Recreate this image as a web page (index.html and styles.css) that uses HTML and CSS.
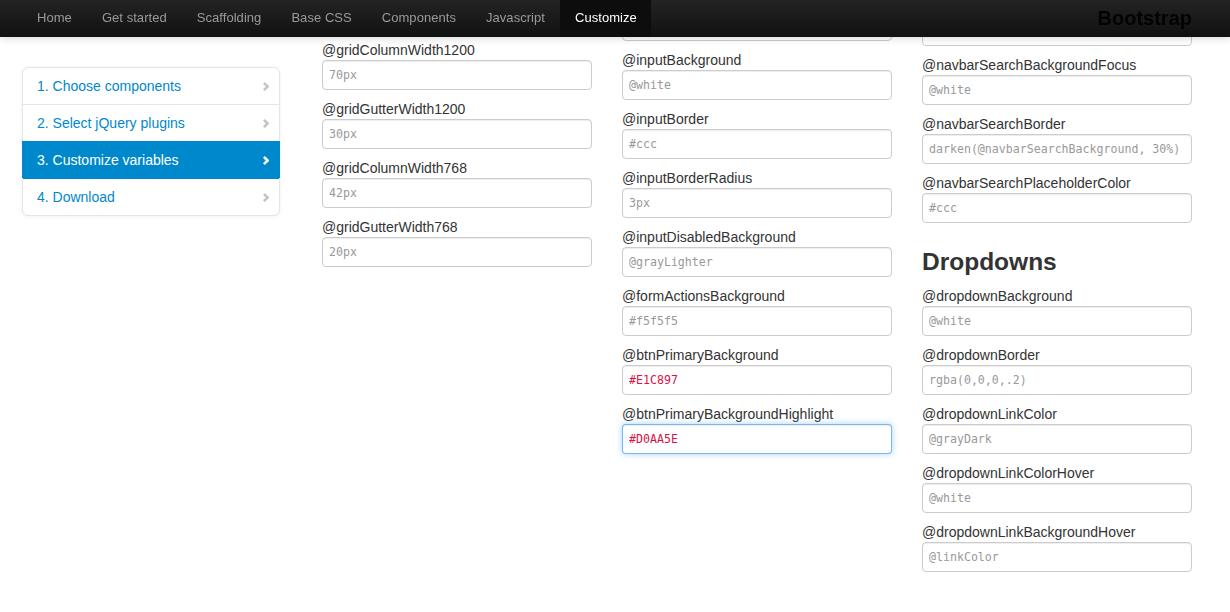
FILE: index.html
```html
<!DOCTYPE html>
<html>
<head>
<meta charset="utf-8">
<title>Customize · Bootstrap</title>
<link rel="stylesheet" href="styles.css">
</head>
<body>
<div class="navbar">
  <ul class="nav">
    <li><a href="#">Home</a></li>
    <li><a href="#">Get started</a></li>
    <li><a href="#">Scaffolding</a></li>
    <li><a href="#">Base CSS</a></li>
    <li><a href="#">Components</a></li>
    <li><a href="#">Javascript</a></li>
    <li class="active"><a href="#">Customize</a></li>
  </ul>
  <a class="brand" href="#">Bootstrap</a>
</div>

<div class="page">
  <ul class="sidenav">
    <li><a href="#">1. Choose components<svg class="chev" viewBox="0 0 6 9"><path d="M0.9 0.9 L4.6 4.5 L0.9 8.1" /></svg></a></li>
    <li><a href="#">2. Select jQuery plugins<svg class="chev" viewBox="0 0 6 9"><path d="M0.9 0.9 L4.6 4.5 L0.9 8.1" /></svg></a></li>
    <li class="active"><a href="#">3. Customize variables<svg class="chev" viewBox="0 0 6 9"><path d="M0.9 0.9 L4.6 4.5 L0.9 8.1" /></svg></a></li>
    <li><a href="#">4. Download<svg class="chev" viewBox="0 0 6 9"><path d="M0.9 0.9 L4.6 4.5 L0.9 8.1" /></svg></a></li>
  </ul>

  <div class="col col-a">
    <div class="group"><label>@gridColumnWidth1200</label><input type="text" placeholder="70px"></div>
    <div class="group"><label>@gridGutterWidth1200</label><input type="text" placeholder="30px"></div>
    <div class="group"><label>@gridColumnWidth768</label><input type="text" placeholder="42px"></div>
    <div class="group"><label>@gridGutterWidth768</label><input type="text" placeholder="20px"></div>
  </div>

  <div class="col col-b">
    <div class="group"><input type="text"></div>
    <div class="group"><label>@inputBackground</label><input type="text" placeholder="@white"></div>
    <div class="group"><label>@inputBorder</label><input type="text" placeholder="#ccc"></div>
    <div class="group"><label>@inputBorderRadius</label><input type="text" placeholder="3px"></div>
    <div class="group"><label>@inputDisabledBackground</label><input type="text" placeholder="@grayLighter"></div>
    <div class="group"><label>@formActionsBackground</label><input type="text" placeholder="#f5f5f5"></div>
    <div class="group"><label>@btnPrimaryBackground</label><input type="text" value="#E1C897"></div>
    <div class="group"><label>@btnPrimaryBackgroundHighlight</label><input class="focus" type="text" value="#D0AA5E"></div>
  </div>

  <div class="col col-c">
    <div class="group"><input type="text"></div>
    <div class="group"><label>@navbarSearchBackgroundFocus</label><input type="text" placeholder="@white"></div>
    <div class="group"><label>@navbarSearchBorder</label><input type="text" placeholder="darken(@navbarSearchBackground, 30%)"></div>
    <div class="group"><label>@navbarSearchPlaceholderColor</label><input type="text" placeholder="#ccc"></div>
    <h3>Dropdowns</h3>
    <div class="group"><label>@dropdownBackground</label><input type="text" placeholder="@white"></div>
    <div class="group"><label>@dropdownBorder</label><input type="text" placeholder="rgba(0,0,0,.2)"></div>
    <div class="group"><label>@dropdownLinkColor</label><input type="text" placeholder="@grayDark"></div>
    <div class="group"><label>@dropdownLinkColorHover</label><input type="text" placeholder="@white"></div>
    <div class="group"><label>@dropdownLinkBackgroundHover</label><input type="text" placeholder="@linkColor"></div>
  </div>
</div>
</body>
</html>
```
FILE: styles.css
```css
html, body {
  margin: 0;
  padding: 0;
  background: #fff;
  overflow: hidden;
}
body {
  font-family: "Liberation Sans", Helvetica, Arial, sans-serif;
  font-size: 14px;
  line-height: 20px;
  color: #333;
}

/* navbar */
.navbar {
  position: fixed;
  top: 0;
  left: 0;
  right: 0;
  height: 37px;
  z-index: 10;
  display: flex;
  justify-content: space-between;
  align-items: center;
  padding: 0 38px 0 22px;
  background: linear-gradient(to bottom, #232323 0%, #111 100%);
  box-shadow: 0 1px 8px rgba(0, 0, 0, 0.18);
}
.nav {
  display: flex;
  list-style: none;
  margin: 0;
  padding: 0;
  height: 37px;
}
.nav li a {
  display: block;
  padding: 8px 15px 9px;
  font-size: 13px;
  line-height: 20px;
  letter-spacing: 0.05px;
  color: #999;
  text-decoration: none;
}
.nav li.active a {
  background: #0d0d0d;
  color: #fff;
  padding: 8px 14px 9px 15px;
}
.brand {
  font-size: 20px;
  font-weight: bold;
  color: #030303;
  text-decoration: none;
  line-height: 20px;
  margin-top: -2px;
}

/* page */
.page {
  display: flex;
  align-items: flex-start;
  padding-left: 22px;
}

.sidenav {
  width: 258px;
  box-sizing: border-box;
  margin: 67px 42px 0 0;
  padding: 0;
  list-style: none;
  background: #fff;
  border: 1px solid #e5e5e5;
  border-radius: 6px;
  box-shadow: 0 1px 4px rgba(0, 0, 0, 0.06);
}
.sidenav li {
  border-top: 1px solid #e5e5e5;
}
.sidenav li:first-child {
  border-top: none;
}
.sidenav li a {
  display: flex;
  justify-content: space-between;
  align-items: center;
  padding: 8px 10px 8px 14px;
  height: 20px;
  color: #0088cc;
  text-decoration: none;
}
.sidenav li.active {
  background: #0088cc;
  margin: 0 -1px;
  border-top: 1px solid #0088cc;
  padding: 0 1px;
}
.sidenav li.active + li {
  border-top-color: #0088cc;
}
.sidenav li.active a {
  color: #fff;
}
.chev {
  width: 6px;
  height: 9px;
  fill: none;
  stroke: #c4c4c4;
  stroke-width: 2.5;
}
.sidenav li.active .chev {
  stroke: #fff;
}

/* columns */
.col {
  width: 270px;
  display: flex;
  flex-direction: column;
}
.col + .col {
  margin-left: 30px;
}
.col-a { margin-top: 40px; }
.col-b { margin-top: 11px; }
.col-c { margin-top: 16px; }

.group {
  display: flex;
  flex-direction: column;
  margin-bottom: 9px;
}
.group label {
  display: block;
  line-height: 20px;
  color: #333;
}
.group input {
  box-sizing: border-box;
  width: 270px;
  height: 30px;
  margin: 0;
  padding: 4px 6px;
  border: 1px solid #ccc;
  border-radius: 4px;
  box-shadow: inset 0 1px 1px rgba(0, 0, 0, 0.075);
  background: #fff;
  font-family: "DejaVu Sans Mono", Menlo, "Liberation Mono", monospace;
  font-size: 11.6px;
  color: #d14;
  outline: none;
}
.group input::placeholder {
  color: #999;
  opacity: 1;
}
.group input.focus {
  border-color: rgba(82, 168, 236, 0.8);
  box-shadow: inset 0 1px 1px rgba(0, 0, 0, 0.075), 0 0 6px rgba(82, 168, 236, 0.5);
}

h3 {
  margin: 10px 0 4px;
  font-size: 24.5px;
  line-height: 40px;
  font-weight: bold;
  color: #333;
}
```
